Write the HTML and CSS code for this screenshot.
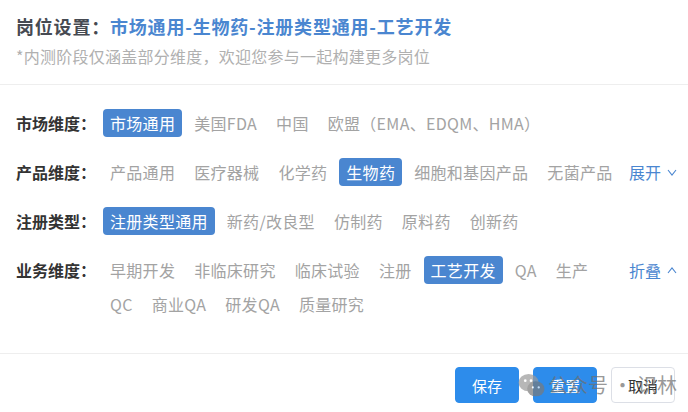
FILE: index.html
```html
<!DOCTYPE html>
<html lang="zh-CN">
<head>
<meta charset="utf-8">
<title>岗位设置</title>
<link rel="stylesheet" href="styles.css">
</head>
<body>
<div class="panel">
  <header class="header">
    <h1 class="title">岗位设置：<span class="title-value">市场通用-生物药-注册类型通用-工艺开发</span></h1>
    <p class="subtitle">*内测阶段仅涵盖部分维度，欢迎您参与一起构建更多岗位</p>
  </header>

  <section class="filters">
    <div class="row">
      <div class="label">市场维度：</div>
      <div class="opts">
        <span class="opt active">市场通用</span>
        <span class="opt">美国FDA</span>
        <span class="opt">中国</span>
        <span class="opt">欧盟（EMA、EDQM、HMA）</span>
      </div>
    </div>
    <div class="row">
      <div class="label">产品维度：</div>
      <div class="opts">
        <span class="opt">产品通用</span>
        <span class="opt">医疗器械</span>
        <span class="opt">化学药</span>
        <span class="opt active">生物药</span>
        <span class="opt">细胞和基因产品</span>
        <span class="opt">无菌产品</span>
      </div>
      <div class="toggle">展开<svg class="chev" viewBox="0 0 10 7" width="10" height="7"><path d="M1 1 L5 6 L9 1" fill="none" stroke="currentColor" stroke-width="1.1"/></svg></div>
    </div>
    <div class="row">
      <div class="label">注册类型：</div>
      <div class="opts">
        <span class="opt active">注册类型通用</span>
        <span class="opt">新药/改良型</span>
        <span class="opt">仿制药</span>
        <span class="opt">原料药</span>
        <span class="opt">创新药</span>
      </div>
    </div>
    <div class="row">
      <div class="label">业务维度：</div>
      <div class="opts">
        <span class="opt">早期开发</span>
        <span class="opt">非临床研究</span>
        <span class="opt">临床试验</span>
        <span class="opt">注册</span>
        <span class="opt active">工艺开发</span>
        <span class="opt">QA</span>
        <span class="opt">生产</span>
        <span class="opt">QC</span>
        <span class="opt">商业QA</span>
        <span class="opt">研发QA</span>
        <span class="opt">质量研究</span>
      </div>
      <div class="toggle">折叠<svg class="chev" viewBox="0 0 10 7" width="10" height="7"><path d="M1 6 L5 1 L9 6" fill="none" stroke="currentColor" stroke-width="1.1"/></svg></div>
    </div>
  </section>

  <footer class="footer">
    <button class="btn primary">保存</button>
    <button class="btn primary">重置</button>
    <button class="btn plain">取消</button>
  </footer>

  <div class="watermark">
    <svg class="wm-icon" viewBox="0 0 28 26" width="27" height="25">
      <ellipse cx="11" cy="10" rx="10.5" ry="9" fill="#9a9a9a"/>
      <ellipse cx="18.5" cy="16.5" rx="9" ry="7.8" fill="#7a7a7a"/>
      <circle cx="7.5" cy="8" r="1.4" fill="#fff"/>
      <circle cx="13.5" cy="8" r="1.4" fill="#fff"/>
      <circle cx="15.5" cy="15" r="1.2" fill="#fff"/>
      <circle cx="21.5" cy="15" r="1.2" fill="#fff"/>
    </svg>
    <span class="wm-text">公众号 · 识林</span>
  </div>
</div>
</body>
</html>
```

FILE: styles.css
```css
* { box-sizing: border-box; }

html, body {
  margin: 0;
  padding: 0;
  background: #ffffff;
}

body {
  font-family: "Noto Sans CJK SC", "Noto Sans", sans-serif;
  color: #333;
  width: 688px;
  height: 412px;
  overflow: hidden;
}

.panel {
  position: relative;
  height: 412px;
}

.header {
  padding: 13px 16px 17px;
  border-bottom: 1px solid #eeeeee;
}

.title {
  margin: 0;
  font-size: 18px;
  line-height: 26px;
  font-weight: 700;
  color: #464a52;
  letter-spacing: 0.8px;
}

.title-value {
  color: #4a86d0;
}

.subtitle {
  margin: 6px 0 0;
  font-size: 16px;
  line-height: 22px;
  color: #b0b0b0;
  letter-spacing: 0.25px;
}

.filters {
  padding: 24px 11px 35px 16px;
}

.row {
  display: flex;
  align-items: flex-start;
  margin-bottom: 21px;
}

.row:last-child {
  margin-bottom: 0;
}

.label {
  width: 87px;
  flex: none;
  font-size: 16px;
  line-height: 28px;
  font-weight: 700;
  color: #333;
}

.opts {
  flex: 1;
  display: flex;
  flex-wrap: wrap;
  gap: 6px 5px;
}

.opt {
  padding: 0 7px;
  font-size: 16px;
  line-height: 28px;
  color: #a3a3a3;
  border-radius: 4px;
  letter-spacing: 0.3px;
  white-space: nowrap;
}

.opt.active {
  background: #4a86d0;
  color: #ffffff;
}

.toggle {
  flex: none;
  margin-left: 2px;
  display: flex;
  align-items: center;
  gap: 6px;
  font-size: 16px;
  line-height: 28px;
  color: #4a86d0;
}

.chev {
  display: block;
}

.footer {
  border-top: 1px solid #eeeeee;
  padding: 13px 13px 0;
  display: flex;
  justify-content: flex-end;
  gap: 14px;
}

.btn {
  width: 64px;
  height: 36px;
  border-radius: 4px;
  font-family: inherit;
  font-size: 15px;
  padding: 0;
  cursor: pointer;
}

.btn.primary {
  background: #2d8ceb;
  border: 1px solid #2d8ceb;
  color: #ffffff;
}

.btn.plain {
  background: #ffffff;
  border: 1px solid #dcdfe6;
  color: #333;
}

.watermark {
  position: absolute;
  left: 518px;
  top: 371px;
  display: flex;
  align-items: center;
  gap: 3px;
  white-space: nowrap;
  pointer-events: none;
  opacity: 0.7;
}

.wm-icon {
  display: block;
  flex: none;
}

.wm-text {
  font-size: 20px;
  line-height: 28px;
  color: #6f6f6f;
  white-space: nowrap;
}
```
